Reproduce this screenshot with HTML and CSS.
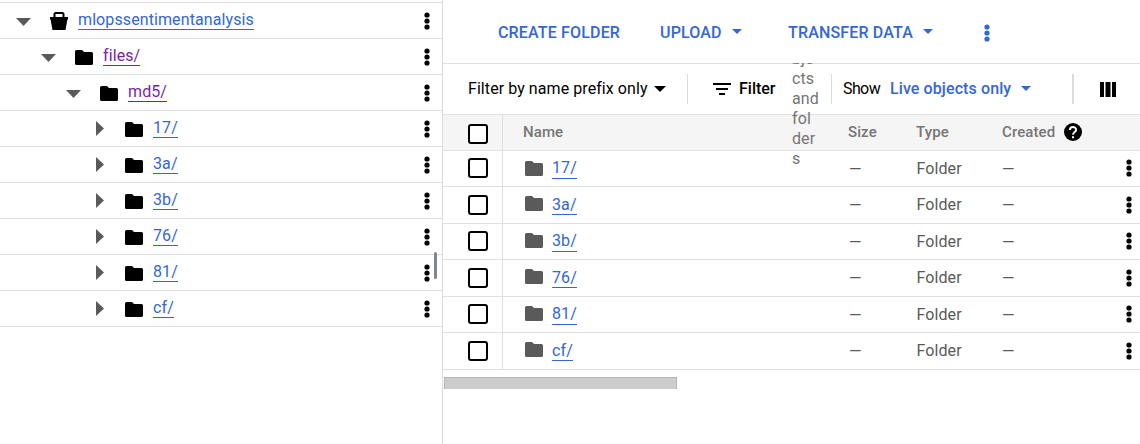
FILE: index.html
```html
<!DOCTYPE html>
<html lang="en">
<head>
<meta charset="utf-8">
<title>Bucket browser</title>
<link rel="stylesheet" href="styles.css">
</head>
<body>
<svg class="defs" width="0" height="0">
  <symbol id="folder" viewBox="0 0 18 15"><path d="M1.500 0H7l2 2h7.500Q18 2 18 3.500v10Q18 15 16.500 15h-15Q0 15 0 13.500v-12Q0 0 1.500 0z"/></symbol>
  <symbol id="bucket" viewBox="0 0 18 18"><path fill-rule="evenodd" d="M5 0h8l1.500 1.500V5H18v2.500h-.6L15.500 18h-13L.6 7.500H0V5h3.500V1.500zM5.500 2v3h7V2z"/></symbol>
  <symbol id="dots" viewBox="0 0 6 18"><circle cx="3" cy="3" r="2.600"/><circle cx="3" cy="9" r="2.600"/><circle cx="3" cy="15" r="2.600"/></symbol>
  <symbol id="down" viewBox="0 0 10 5"><path d="M0 0h10L5 5z"/></symbol>
  <symbol id="open" viewBox="0 0 15 8"><path d="M0 0h15L7.500 8z"/></symbol>
  <symbol id="closed" viewBox="0 0 8 15"><path d="M0 0v15L8 7.500z"/></symbol>
</svg>
<div class="app">
  <nav class="tree">
    <div class="node level0"><svg class="open"><use href="#open"/></svg><svg class="bucket"><use href="#bucket"/></svg><a class="link">mlopssentimentanalysis</a><svg class="dots"><use href="#dots"/></svg></div>
    <div class="node level1"><svg class="open"><use href="#open"/></svg><svg class="folder"><use href="#folder"/></svg><a class="link visited">files/</a><svg class="dots"><use href="#dots"/></svg></div>
    <div class="node level2"><svg class="open"><use href="#open"/></svg><svg class="folder"><use href="#folder"/></svg><a class="link visited">md5/</a><svg class="dots"><use href="#dots"/></svg></div>
    <div class="node level3"><svg class="closed"><use href="#closed"/></svg><svg class="folder"><use href="#folder"/></svg><a class="link">17/</a><svg class="dots"><use href="#dots"/></svg></div>
    <div class="node level3"><svg class="closed"><use href="#closed"/></svg><svg class="folder"><use href="#folder"/></svg><a class="link">3a/</a><svg class="dots"><use href="#dots"/></svg></div>
    <div class="node level3"><svg class="closed"><use href="#closed"/></svg><svg class="folder"><use href="#folder"/></svg><a class="link">3b/</a><svg class="dots"><use href="#dots"/></svg></div>
    <div class="node level3"><svg class="closed"><use href="#closed"/></svg><svg class="folder"><use href="#folder"/></svg><a class="link">76/</a><svg class="dots"><use href="#dots"/></svg></div>
    <div class="node level3"><svg class="closed"><use href="#closed"/></svg><svg class="folder"><use href="#folder"/></svg><a class="link">81/</a><svg class="dots"><use href="#dots"/></svg></div>
    <div class="node level3"><svg class="closed"><use href="#closed"/></svg><svg class="folder"><use href="#folder"/></svg><a class="link">cf/</a><svg class="dots"><use href="#dots"/></svg></div>
    <span class="resizer"></span>
  </nav>
  <main class="objects">
    <div class="actions">
      <span class="action create">CREATE FOLDER</span>
      <span class="action upload">UPLOAD</span><svg class="down"><use href="#down"/></svg>
      <span class="action transfer">TRANSFER DATA</span><svg class="down"><use href="#down"/></svg>
      <svg class="more"><use href="#dots"/></svg>
    </div>
    <div class="filters">
      <span class="prefix">Filter by name prefix only</span><svg class="caret"><use href="#down"/></svg>
      <i class="rule"></i>
      <svg class="lines" viewBox="0 0 18 12"><path d="M0 0h18v2H0zM3 5h12v2H3zM6 10h6v2H6z"/></svg>
      <span class="filter">Filter</span>
      <span class="hint-slot"><span class="hint">bje<br>cts<br>and<br>fol<br>der<br>s</span></span>
      <i class="rule second"></i>
      <span class="show">Show</span>
      <span class="live">Live objects only</span><svg class="down"><use href="#down"/></svg>
      <i class="rule wide"></i>
      <svg class="columns" viewBox="0 0 16 15"><path d="M0 0h4v15H0zM5.500 0h5v15h-5zM12 0h4v15h-4z"/></svg>
    </div>
    <div class="row head">
      <div class="check"><span class="box"></span></div>
      <span class="name">Name</span><span class="size">Size</span><span class="type">Type</span><span class="created">Created</span>
      <svg class="help" viewBox="0 0 18 18"><circle cx="9" cy="9" r="9"/><path class="mark" d="M5.900 7.100C5.900 2.900 12.100 3 12.100 6.900 12.100 9 9 9.100 9 11.700"/><path class="point" d="M8 13.200h2v2H8z"/></svg>
    </div>
    <div class="row first"><div class="check"><span class="box"></span></div><div class="name"><svg class="folder"><use href="#folder"/></svg><a class="link">17/</a></div><span class="size dash">—</span><span class="type">Folder</span><span class="created dash">—</span><svg class="dots"><use href="#dots"/></svg></div>
    <div class="row tall"><div class="check"><span class="box"></span></div><div class="name"><svg class="folder"><use href="#folder"/></svg><a class="link">3a/</a></div><span class="size dash">—</span><span class="type">Folder</span><span class="created dash">—</span><svg class="dots"><use href="#dots"/></svg></div>
    <div class="row"><div class="check"><span class="box"></span></div><div class="name"><svg class="folder"><use href="#folder"/></svg><a class="link">3b/</a></div><span class="size dash">—</span><span class="type">Folder</span><span class="created dash">—</span><svg class="dots"><use href="#dots"/></svg></div>
    <div class="row tall"><div class="check"><span class="box"></span></div><div class="name"><svg class="folder"><use href="#folder"/></svg><a class="link">76/</a></div><span class="size dash">—</span><span class="type">Folder</span><span class="created dash">—</span><svg class="dots"><use href="#dots"/></svg></div>
    <div class="row"><div class="check"><span class="box"></span></div><div class="name"><svg class="folder"><use href="#folder"/></svg><a class="link">81/</a></div><span class="size dash">—</span><span class="type">Folder</span><span class="created dash">—</span><svg class="dots"><use href="#dots"/></svg></div>
    <div class="row tall"><div class="check"><span class="box"></span></div><div class="name"><svg class="folder"><use href="#folder"/></svg><a class="link">cf/</a></div><span class="size dash">—</span><span class="type">Folder</span><span class="created dash">—</span><svg class="dots"><use href="#dots"/></svg></div>
    <div class="scrollbar"></div>
  </main>
</div>
</body>
</html>
```
FILE: styles.css
```css
* { box-sizing: border-box; }
body { margin: 0; background: #fff; color: #000; font: 16px/20px Roboto, sans-serif; letter-spacing: .1px; }
.defs { position: absolute; }
svg { flex: none; display: block; fill: currentColor; }
span, a { white-space: nowrap; flex: none; }
.app { display: flex; width: 1140px; height: 444px; overflow: hidden; }

.tree { position: relative; flex: none; width: 443px; border-right: 1px solid #dadce0; padding-top: 2px; }
.node { display: flex; align-items: flex-start; height: 36px; border-bottom: 1px solid #e0e0e0; padding-right: 12px; }
.node:first-child { height: 37px; border-top: 1px solid #e0e0e0; }
.level0 { padding-left: 16px; }
.level1 { padding-left: 41px; }
.level2 { padding-left: 66px; }
.level3 { padding-left: 96px; }
.open { width: 15px; height: 8px; margin: 15px 19px 0 0; color: #5a5a5a; }
.closed { width: 8px; height: 15px; margin: 10px 21px 0 0; color: #5a5a5a; }
.bucket { width: 18px; height: 18px; margin: 9px 10px 0 0; }
.folder { width: 18px; height: 15px; margin: 11px 10px 0 0; }
.dots { width: 6px; height: 18px; margin: 9px 0 0 auto; }
.link { height: 20px; margin-top: 7px; line-height: 20px; color: #3367d6; border-bottom: 1px solid #3367d6; }
.visited { color: #7b1fa2; border-color: #7b1fa2; }
.resizer { position: absolute; left: 434px; top: 252px; width: 3px; height: 27px; border-radius: 2px; background: #80868b; }

.objects { flex: none; width: 697px; }
.actions { display: flex; align-items: center; height: 64px; padding: 1px 0 0 55px; border-bottom: 1px solid #e0e0e0; color: #3367d6; }
.action { font-weight: 500; padding-top: 1px; letter-spacing: .16px; }
.create { width: 162px; }
.upload { width: 72px; }
.transfer { width: 135px; }
.down { width: 10px; height: 5px; margin-top: -1px; }
.actions .upload + .down { margin-right: 46px; }
.more { width: 6px; height: 18px; margin: 2px 0 0 51px; }

.filters { display: flex; align-items: center; height: 51px; padding-left: 25px; border-bottom: 1px solid #e0e0e0; }
.prefix { width: 186px; letter-spacing: .07px; }
.caret { width: 12px; height: 6px; margin-top: -1px; }
.rule { flex: none; width: 1px; height: 30px; margin-left: 21px; background: #dadce0; }
.lines { width: 18px; height: 12px; margin-left: 25px; }
.filter { width: 53px; margin-left: 8px; font-weight: 500; letter-spacing: 0; }
.hint-slot { position: relative; width: 38px; height: 50px; }
.hint { position: absolute; left: 0; top: -15px; color: #757575; clip-path: inset(14px 0 0 0); z-index: 1; }
.rule.second { margin-left: 1px; }
.show { width: 47px; margin-left: 11px; letter-spacing: -.6px; }
.live { width: 131px; font-weight: 500; color: #3367d6; }
.live + .down { color: #3367d6; }
.rule.wide { width: 2px; margin-left: 41px; }
.columns { width: 16px; height: 15px; margin-left: 26px; }

.row { display: flex; height: 36px; border-bottom: 1px solid #e0e0e0; color: #5a5a5a; }
.row.tall { height: 37px; }
.check { flex: none; width: 60px; padding: 7px 0 0 25px; border-right: 1px solid #e0e0e0; }
.tall .check { padding-top: 8px; }
.head .check { padding-top: 9px; }
.box { display: block; width: 20px; height: 20px; border: 2px solid #000; border-radius: 3px; background: #fff; }
.name { display: flex; flex: none; width: 346px; padding-left: 22px; }
.row .folder { margin: 9px 9px 0 0; }
.first .folder { margin-top: 10px; }
.row .link { margin-top: 8px; line-height: 18px; }
.tall .link { line-height: 20px; }
.size, .type, .created { padding-top: 8px; }
.row .dash { padding-top: 9px; }
.size { width: 68px; }
.size.dash { width: 67.5px; }
.type { width: 85.5px; }
.row .dots { margin: 8px 8px 0 auto; color: #000; }
.tall .dots { margin-top: 9px; }
.row.head { background: #f5f5f5; color: #757575; font-size: 15px; font-weight: 500; }
.head > span { padding-top: 7px; }
.head .name { width: 345px; padding-left: 20px; }
.head .type { width: 86px; }
.help { width: 18px; height: 18px; margin: 8px 0 0 9px; color: #000; }
.mark { fill: none; stroke: #fff; stroke-width: 1.9; }
.point { fill: #fff; }
.scrollbar { width: 233px; height: 12px; margin: 7px 0 0 1px; border: 1px solid #b5b5b5; border-width: 1px 1px 0; background: #ccc; }
```
